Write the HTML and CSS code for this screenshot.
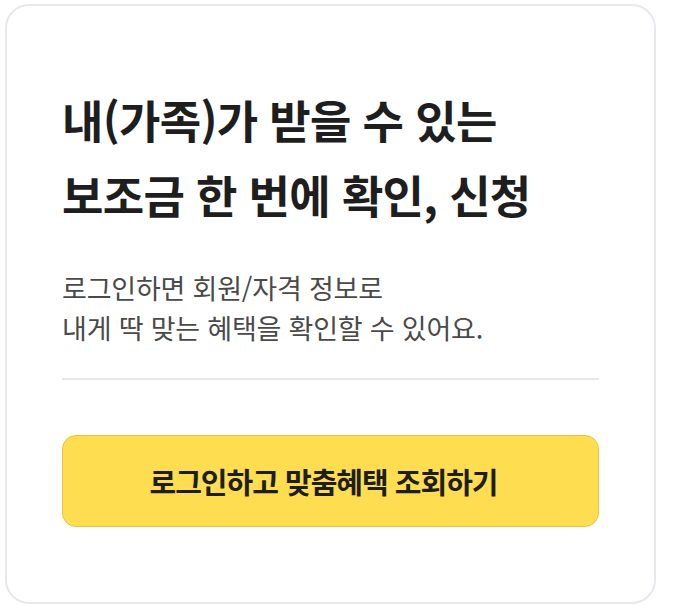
FILE: index.html
```html
<!DOCTYPE html>
<html lang="ko">
<head>
<meta charset="utf-8">
<title>맞춤혜택</title>
<link rel="stylesheet" href="styles.css">
</head>
<body>
<section class="card">
  <h2 class="title">내(가족)가 받을 수 있는<br>보조금 한 번에 확인, 신청</h2>
  <p class="desc">로그인하면 회원/자격 정보로<br>내게 딱 맞는 혜택을 확인할 수 있어요.</p>
  <hr class="divider">
  <button class="cta" type="button">로그인하고 맞춤혜택 조회하기</button>
</section>
</body>
</html>
```
FILE: styles.css
```css
html, body {
  margin: 0;
  background: #ffffff;
}
body {
  padding: 4px 5px;
  font-family: "Noto Sans CJK KR", "Noto Sans", sans-serif;
}
.card {
  box-sizing: border-box;
  width: 651px;
  height: 600px;
  border: 2px solid #e6e8ee;
  border-radius: 24px;
  padding: 76px 55px 0 55px;
  display: flex;
  flex-direction: column;
}
.title {
  margin: 0;
  font-size: 45px;
  line-height: 75px;
  font-weight: 700;
  letter-spacing: -0.7px;
  color: #1e1e1e;
}
.desc {
  margin: 36px 0 0 0;
  font-size: 27px;
  line-height: 40px;
  font-weight: 400;
  letter-spacing: -0.2px;
  color: #4a4a4a;
}
.divider {
  margin: 30px 0 0 0;
  border: 0;
  height: 2px;
  background: #e5e7ec;
}
.cta {
  margin-top: 55px;
  height: 92px;
  padding: 0 14px 0 0;
  border: 1px solid #e6c43e;
  border-radius: 14px;
  background: #fedd50;
  font-family: inherit;
  font-size: 29px;
  font-weight: 700;
  letter-spacing: -1px;
  color: #1e1e1e;
  cursor: pointer;
}
```
